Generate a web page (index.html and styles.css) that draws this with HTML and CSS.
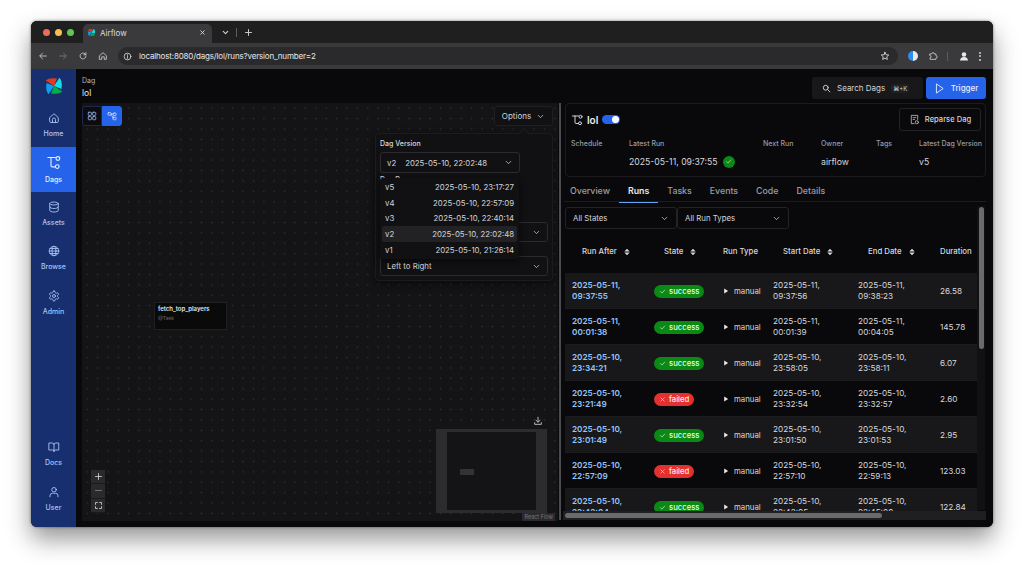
FILE: index.html
```html
<!DOCTYPE html>
<html lang="en">
<head>
    <meta charset="UTF-8">
    <title>Airflow</title>
    <link rel="stylesheet" href="styles.css">
</head>
<body>
    <svg class="icon-defs" width="0" height="0">
        <defs>
            <symbol id="logo" viewBox="0 0 24 24">
                <path fill="#e43921" d="M12 12 2 5.500Q6 1.500 15.500 3Z"/>
                <path fill="#11dfe8" d="M12 12 18.500 2Q22.500 6 21 15.500Z"/>
                <path fill="#00ad46" d="M12 12 22 18.500Q18 22.500 8.500 21Z"/>
                <path fill="#0c9ff0" d="M12 12 5.500 22Q1.500 18 3 8.500Z"/>
            </symbol>
            <symbol id="dags" viewBox="0 0 24 24">
                <path d="M3 4h12M8 4v13a2 2 0 0 0 2 2h5"/>
                <circle cx="19" cy="5.500" r="3"/>
                <circle cx="18" cy="18.500" r="3"/>
            </symbol>
            <symbol id="chev" viewBox="0 0 24 24">
                <path d="m6 9 6 6 6-6"/>
            </symbol>
            <symbol id="check" viewBox="0 0 24 24">
                <path d="m5 12.500 5 5L19.500 7"/>
            </symbol>
            <symbol id="cross" viewBox="0 0 24 24">
                <path d="M6 6l12 12M18 6 6 18"/>
            </symbol>
            <symbol id="sort" viewBox="0 0 10 12">
                <path d="M5 0.500 9.500 5H0.500ZM5 11.500 0.500 7h9Z"/>
            </symbol>
            <symbol id="play" viewBox="0 0 10 10">
                <path d="M2 1l6.500 4L2 9Z"/>
            </symbol>
        </defs>
    </svg>

    <div class="window">
        <div class="tabbar">
            <div class="lights"><i class="red"></i><i class="amber"></i><i class="green"></i></div>
            <div class="tab">
                <svg class="tab-logo"><use href="#logo"/></svg>
                <span class="tab-title">Airflow</span>
                <svg class="tab-close" viewBox="0 0 24 24"><use href="#cross"/></svg>
            </div>
            <svg class="tab-more" viewBox="0 0 24 24"><use href="#chev"/></svg>
            <span class="tab-sep"></span>
            <svg class="tab-new" viewBox="0 0 24 24"><path d="M12 4v16M4 12h16"/></svg>
        </div>

        <div class="toolbar">
            <svg class="tool" viewBox="0 0 24 24"><path d="M20 12H5M11 5l-7 7 7 7"/></svg>
            <svg class="tool dim" viewBox="0 0 24 24"><path d="M4 12h15M13 5l7 7-7 7"/></svg>
            <svg class="tool" viewBox="0 0 24 24"><path d="M19 12a7 7 0 1 1-2.200-5.100L19 9M19 4v5h-5"/></svg>
            <svg class="tool" viewBox="0 0 24 24"><path d="M4 11l8-7 8 7v9h-5v-6H9v6H4Z"/></svg>
            <div class="address">
                <svg class="addr-info" viewBox="0 0 24 24"><circle cx="12" cy="12" r="9"/><path d="M12 11v6M12 7v1.500"/></svg>
                <span class="addr-text">localhost:8080/dags/lol/runs?version_number=2</span>
                <svg class="addr-star" viewBox="0 0 24 24"><path d="m12 3 2.700 6 6.300.6-4.800 4.300 1.400 6.400L12 17l-5.600 3.300 1.400-6.400L3 9.600 9.300 9Z"/></svg>
            </div>
            <div class="ext-icons">
                <span class="ext-round"></span>
                <svg class="tool" viewBox="0 0 24 24"><path d="M5 7h4a3 3 0 0 1 6 0h4v4a3 3 0 0 1 0 6v3H5v-4a2.500 2.500 0 0 0 0-5Z"/></svg>
                <span class="tab-sep"></span>
                <svg class="avatar" viewBox="0 0 24 24"><circle cx="12" cy="12" r="11" fill="#3a3a3a"/><circle cx="12" cy="9" r="4.500" fill="#e8e8e8"/><path d="M4 21c1-6 5-7 8-7s7 1 8 7Z" fill="#e8e8e8"/></svg>
                <span class="kebab"><i></i><i></i><i></i></span>
            </div>
        </div>

        <div class="app">
            <nav class="sidebar">
                <svg class="side-logo"><use href="#logo"/></svg>
                <a class="nav-item">
                    <svg viewBox="0 0 24 24"><path d="M3.500 11 12 3.500l8.500 7.500v8a2 2 0 0 1-2 2h-13a2 2 0 0 1-2-2Z"/><path d="M9 21v-6a3 3 0 0 1 6 0v6"/></svg>
                    <span>Home</span>
                </a>
                <a class="nav-item active">
                    <svg><use href="#dags"/></svg>
                    <span>Dags</span>
                </a>
                <a class="nav-item">
                    <svg viewBox="0 0 24 24"><ellipse cx="12" cy="5" rx="8.500" ry="3"/><path d="M3.500 5v14c0 1.700 3.800 3 8.500 3s8.500-1.300 8.500-3V5M3.500 12c0 1.700 3.800 3 8.500 3s8.500-1.300 8.500-3"/></svg>
                    <span>Assets</span>
                </a>
                <a class="nav-item">
                    <svg viewBox="0 0 24 24"><circle cx="12" cy="12" r="9.500"/><ellipse cx="12" cy="12" rx="4" ry="9.500"/><path d="M2.500 12h19M4 7h16M4 17h16"/></svg>
                    <span>Browse</span>
                </a>
                <a class="nav-item">
                    <svg viewBox="0 0 24 24"><circle cx="12" cy="12" r="3"/><path d="M12.220 2h-.44a2 2 0 0 0-2 2v.18a2 2 0 0 1-1 1.730l-.43.25a2 2 0 0 1-2 0l-.15-.08a2 2 0 0 0-2.730.73l-.22.38a2 2 0 0 0 .73 2.730l.15.1a2 2 0 0 1 1 1.720v.51a2 2 0 0 1-1 1.740l-.15.09a2 2 0 0 0-.73 2.730l.22.38a2 2 0 0 0 2.730.73l.15-.08a2 2 0 0 1 2 0l.43.25a2 2 0 0 1 1 1.730V20a2 2 0 0 0 2 2h.44a2 2 0 0 0 2-2v-.18a2 2 0 0 1 1-1.730l.43-.25a2 2 0 0 1 2 0l.15.08a2 2 0 0 0 2.730-.73l.22-.39a2 2 0 0 0-.73-2.730l-.15-.08a2 2 0 0 1-1-1.740v-.5a2 2 0 0 1 1-1.740l.15-.09a2 2 0 0 0 .73-2.730l-.22-.38a2 2 0 0 0-2.730-.73l-.15.08a2 2 0 0 1-2 0l-.43-.25a2 2 0 0 1-1-1.730V4a2 2 0 0 0-2-2z"/></svg>
                    <span>Admin</span>
                </a>
                <div class="side-gap"></div>
                <a class="nav-item">
                    <svg viewBox="0 0 24 24"><path d="M12 7v14M2.500 4h6a3.500 3.500 0 0 1 3.500 3 3.500 3.500 0 0 1 3.500-3h6v14h-7a2.500 2.500 0 0 0-2.500 3 2.500 2.500 0 0 0-2.500-3h-7Z"/></svg>
                    <span>Docs</span>
                </a>
                <a class="nav-item">
                    <svg viewBox="0 0 24 24"><circle cx="12" cy="7.500" r="4.500"/><path d="M4 21.500v-2a5 5 0 0 1 5-5h6a5 5 0 0 1 5 5v2"/></svg>
                    <span>User</span>
                </a>
            </nav>

            <main class="content">
                <header class="topbar">
                    <div class="crumbs">
                        <span class="crumb-label">Dag</span>
                        <span class="crumb-name">lol</span>
                    </div>
                    <div class="search">
                        <svg viewBox="0 0 24 24"><circle cx="10" cy="10" r="6.500"/><path d="m15 15 6 6"/></svg>
                        <span>Search Dags</span>
                        <kbd>⌘+K</kbd>
                    </div>
                    <button class="trigger">
                        <svg viewBox="0 0 24 24"><path d="M6 2.500 20 12 6 21.500Z"/></svg>
                        Trigger
                    </button>
                </header>

                <div class="panes">
                    <section class="graph">
                        <div class="view-toggle">
                            <span class="toggle-btn">
                                <svg viewBox="0 0 24 24"><rect x="3" y="3" width="7.500" height="7.500" rx="1.500"/><rect x="13.500" y="3" width="7.500" height="7.500" rx="1.500"/><rect x="3" y="13.500" width="7.500" height="7.500" rx="1.500"/><rect x="13.500" y="13.500" width="7.500" height="7.500" rx="1.500"/></svg>
                            </span>
                            <span class="toggle-btn on">
                                <svg viewBox="0 0 24 24"><rect x="2" y="4" width="8" height="6" rx="2"/><rect x="15" y="5" width="7" height="6" rx="2"/><rect x="14" y="15" width="8" height="6" rx="2"/><path d="M10 7h5M10 8l5 9"/></svg>
                            </span>
                        </div>

                        <button class="options-btn">Options <svg><use href="#chev"/></svg></button>

                        <div class="options-panel">
                            <div class="opt-label">Dag Version</div>
                            <div class="opt-select short">
                                <span class="ver">v2</span><span>2025-05-10, 22:02:48</span>
                                <svg><use href="#chev"/></svg>
                            </div>
                            <div class="opt-label cut">Dag Run</div>
                            <div class="opt-select hidden-row">
                                <svg><use href="#chev"/></svg>
                            </div>
                            <div class="opt-select">
                                <span>Left to Right</span>
                                <svg><use href="#chev"/></svg>
                            </div>
                            <ul class="version-menu">
                                <li><span>v5</span><span>2025-05-10, 23:17:27</span></li>
                                <li><span>v4</span><span>2025-05-10, 22:57:09</span></li>
                                <li><span>v3</span><span>2025-05-10, 22:40:14</span></li>
                                <li class="picked"><span>v2</span><span>2025-05-10, 22:02:48</span></li>
                                <li><span>v1</span><span>2025-05-10, 21:26:14</span></li>
                            </ul>
                        </div>

                        <div class="node">
                            <div class="node-name">fetch_top_players</div>
                            <div class="node-type">@Task</div>
                        </div>

                        <div class="zoom-controls">
                            <span><svg viewBox="0 0 24 24"><path d="M12 4v16M4 12h16"/></svg></span>
                            <span class="faint"><svg viewBox="0 0 24 24"><path d="M4 12h16"/></svg></span>
                            <span><svg viewBox="0 0 24 24"><path d="M4 9V4h5M15 4h5v5M20 15v5h-5M9 20H4v-5"/></svg></span>
                        </div>

                        <svg class="download" viewBox="0 0 24 24"><path d="M12 3v11M7 10l5 5 5-5"/><path d="M4 16v4h16v-4"/></svg>

                        <div class="minimap"><div class="minimap-view"><i></i></div></div>
                        <div class="attribution">React Flow</div>
                    </section>

                    <section class="details">
                        <div class="summary">
                            <div class="summary-head">
                                <svg class="summary-icon"><use href="#dags"/></svg>
                                <strong>lol</strong>
                                <span class="switch"></span>
                                <button class="reparse">
                                    <svg viewBox="0 0 24 24"><path d="M11 21H5V3h14v9"/><path d="M9 8h6M9 12h3"/><circle cx="17" cy="18" r="3.500"/></svg>
                                    Reparse Dag
                                </button>
                            </div>
                            <div class="stats">
                                <div class="stat"><label>Schedule</label></div>
                                <div class="stat"><label>Latest Run</label><span>2025-05-11, 09:37:55 <b class="ok-dot"><svg><use href="#check"/></svg></b></span></div>
                                <div class="stat"><label>Next Run</label></div>
                                <div class="stat"><label>Owner</label><span>airflow</span></div>
                                <div class="stat"><label>Tags</label></div>
                                <div class="stat"><label>Latest Dag Version</label><span>v5</span></div>
                            </div>
                        </div>

                        <div class="tabs">
                            <a>Overview</a>
                            <a class="current">Runs</a>
                            <a>Tasks</a>
                            <a>Events</a>
                            <a>Code</a>
                            <a>Details</a>
                        </div>

                        <div class="runs">
                            <div class="filters">
                                <div class="filter">All States <svg><use href="#chev"/></svg></div>
                                <div class="filter">All Run Types <svg><use href="#chev"/></svg></div>
                            </div>

                            <div class="row head">
                                <div class="th first">Run After <svg><use href="#sort"/></svg></div>
                                <div class="th second">State <svg><use href="#sort"/></svg></div>
                                <div class="th">Run Type</div>
                                <div class="th second">Start Date <svg><use href="#sort"/></svg></div>
                                <div class="th second">End Date <svg><use href="#sort"/></svg></div>
                                <div class="th">Duration</div>
                            </div>

                            <div class="row alt">
                                <a class="run-link">2025-05-11,<br>09:37:55</a>
                                <div><span class="badge success"><svg><use href="#check"/></svg>success</span></div>
                                <div class="type"><svg><use href="#play"/></svg>manual</div>
                                <div>2025-05-11,<br>09:37:56</div>
                                <div>2025-05-11,<br>09:38:23</div>
                                <div>26.58</div>
                            </div>
                            <div class="row">
                                <a class="run-link">2025-05-11,<br>00:01:38</a>
                                <div><span class="badge success"><svg><use href="#check"/></svg>success</span></div>
                                <div class="type"><svg><use href="#play"/></svg>manual</div>
                                <div>2025-05-11,<br>00:01:39</div>
                                <div>2025-05-11,<br>00:04:05</div>
                                <div>145.78</div>
                            </div>
                            <div class="row alt">
                                <a class="run-link">2025-05-10,<br>23:34:21</a>
                                <div><span class="badge success"><svg><use href="#check"/></svg>success</span></div>
                                <div class="type"><svg><use href="#play"/></svg>manual</div>
                                <div>2025-05-10,<br>23:58:05</div>
                                <div>2025-05-10,<br>23:58:11</div>
                                <div>6.07</div>
                            </div>
                            <div class="row">
                                <a class="run-link">2025-05-10,<br>23:21:49</a>
                                <div><span class="badge failed"><svg><use href="#cross"/></svg>failed</span></div>
                                <div class="type"><svg><use href="#play"/></svg>manual</div>
                                <div>2025-05-10,<br>23:32:54</div>
                                <div>2025-05-10,<br>23:32:57</div>
                                <div>2.60</div>
                            </div>
                            <div class="row alt">
                                <a class="run-link">2025-05-10,<br>23:01:49</a>
                                <div><span class="badge success"><svg><use href="#check"/></svg>success</span></div>
                                <div class="type"><svg><use href="#play"/></svg>manual</div>
                                <div>2025-05-10,<br>23:01:50</div>
                                <div>2025-05-10,<br>23:01:53</div>
                                <div>2.95</div>
                            </div>
                            <div class="row">
                                <a class="run-link">2025-05-10,<br>22:57:09</a>
                                <div><span class="badge failed"><svg><use href="#cross"/></svg>failed</span></div>
                                <div class="type"><svg><use href="#play"/></svg>manual</div>
                                <div>2025-05-10,<br>22:57:10</div>
                                <div>2025-05-10,<br>22:59:13</div>
                                <div>123.03</div>
                            </div>
                            <div class="row alt">
                                <a class="run-link">2025-05-10,<br>22:42:04</a>
                                <div><span class="badge success"><svg><use href="#check"/></svg>success</span></div>
                                <div class="type"><svg><use href="#play"/></svg>manual</div>
                                <div>2025-05-10,<br>22:42:05</div>
                                <div>2025-05-10,<br>22:45:08</div>
                                <div>122.84</div>
                            </div>

                            <div class="scroll-y"><i></i></div>
                            <div class="scroll-x"><i></i></div>
                        </div>
                    </section>
                </div>
            </main>
        </div>
    </div>
</body>
</html>
```

FILE: styles.css
```css
* {
    box-sizing: border-box;
}
html, body {
    height: 100%;
}
body {
    margin: 0;
    background-color: #fff;
    font-family: Inter, "Liberation Sans", sans-serif;
    font-size: 9px;
    color: #e4e4e7;
    padding: 21px 31px 42px;
    overflow: hidden;
}
svg {
    fill: none;
    stroke: currentColor;
    stroke-width: 2;
    stroke-linecap: round;
    stroke-linejoin: round;
    display: block;
    flex: none;
}
.icon-defs {
    position: absolute;
}
button {
    font: inherit;
    cursor: pointer;
}

.window {
    height: 506px;
    display: flex;
    flex-direction: column;
    border-radius: 6px;
    overflow: hidden;
    box-shadow: 0 12px 24px rgba(0, 0, 0, 0.42), 0 0 3px rgba(0, 0, 0, 0.5);
    background: #000;
}

/* browser chrome */
.tabbar {
    height: 22px;
    flex: none;
    background-color: #1f1f1f;
    display: flex;
    align-items: flex-end;
    padding-left: 12px;
}
.lights {
    display: flex;
    gap: 5px;
    align-self: center;
    margin-right: 9px;
}
.lights i {
    width: 7px;
    height: 7px;
    border-radius: 50%;
}
.lights .red { background: #ed6a5e; }
.lights .amber { background: #f4bf4f; }
.lights .green { background: #61c554; }
.tab {
    width: 129px;
    height: 19px;
    background: #3a3a3c;
    border-radius: 5px 5px 0 0;
    display: flex;
    align-items: center;
    padding: 0 6px 2px 4px;
    font-size: 8px;
    color: #dedede;
}
.tab-logo {
    width: 9px;
    height: 9px;
    margin-right: 4px;
    stroke: none;
}
.tab-title {
    flex: 1;
}
.tab-close {
    width: 7px;
    height: 7px;
    stroke-width: 3;
}
.tab-more {
    width: 9px;
    height: 9px;
    margin: 0 6px 6px 9px;
    stroke-width: 3;
    color: #cfcfcf;
}
.tab-sep {
    width: 1px;
    height: 9px;
    background: #5c5c5c;
    margin-bottom: 6px;
}
.tab-new {
    width: 9px;
    height: 9px;
    margin: 0 0 6px 7px;
    stroke-width: 2.5;
    color: #cfcfcf;
}
.toolbar {
    height: 26px;
    flex: none;
    background: #3a3a3c;
    display: flex;
    align-items: center;
    padding: 0 12px 0 7px;
    gap: 10px;
    color: #cfcfcf;
}
.tool {
    width: 10px;
    height: 10px;
}
.tool.dim {
    color: #7b7b7b;
}
.address {
    flex: 1;
    height: 18px;
    background: #2a2a2c;
    border-radius: 9px;
    display: flex;
    align-items: center;
    padding: 0 8px 0 5px;
    font-size: 8px;
    letter-spacing: -0.16px;
    color: #e6e6e6;
}
.addr-info {
    width: 9px;
    height: 9px;
    margin-right: 7px;
}
.addr-text {
    flex: 1;
}
.addr-star {
    width: 10px;
    height: 10px;
}
.ext-icons {
    display: flex;
    align-items: center;
    gap: 10px;
}
.ext-icons .tab-sep {
    margin: 0 -1px 0 -1px;
}
.ext-round {
    width: 10px;
    height: 10px;
    border-radius: 50%;
    background: conic-gradient(#e8e8e8 0 50%, #2d8cf0 50% 100%);
}
.avatar {
    width: 12px;
    height: 12px;
    stroke: none;
    margin-left: 1px;
}
.kebab {
    display: flex;
    flex-direction: column;
    gap: 1.5px;
    margin-left: -1px;
}
.kebab i {
    width: 2px;
    height: 2px;
    border-radius: 50%;
    background: #d0d0d0;
}

/* app shell */
.app {
    flex: 1;
    display: flex;
    min-height: 0;
}
.sidebar {
    width: 45px;
    flex: none;
    background: #172f6f;
    display: flex;
    flex-direction: column;
    align-items: stretch;
    padding-top: 7px;
}
.side-logo {
    width: 20px;
    height: 20px;
    margin: 0 auto 6.5px;
    stroke: none;
}
.nav-item {
    height: 44.5px;
    flex: none;
    display: flex;
    flex-direction: column;
    align-items: center;
    padding-top: 9px;
    gap: 5px;
    font-size: 7px;
    line-height: 9px;
    font-weight: 500;
    color: #a9c4f5;
}
.nav-item svg {
    width: 12px;
    height: 12px;
    stroke-width: 1.8;
}
.nav-item.active {
    background: #2563eb;
    color: #e8f0ff;
    padding-top: 8px;
    gap: 4.5px;
}
.nav-item.active svg {
    width: 15px;
    height: 15px;
}
.side-gap {
    flex: 1;
}
.sidebar .nav-item:last-child {
    margin-bottom: 6px;
}

.content {
    flex: 1;
    min-width: 0;
    background: #09090b;
    display: flex;
    flex-direction: column;
    padding: 0 7px 7px 6px;
}
.topbar {
    height: 34px;
    flex: none;
    display: flex;
    align-items: center;
    padding-top: 4px;
}
.crumbs {
    flex: 1;
    display: flex;
    flex-direction: column;
    gap: 2px;
    align-self: flex-start;
    padding-top: 3px;
}
.crumb-label {
    font-size: 7px;
    line-height: 10px;
    color: #b5b5ba;
}
.crumb-name {
    font-size: 8.5px;
    line-height: 10px;
    color: #e8e8ea;
}
.search {
    width: 111px;
    height: 22px;
    background: #18181b;
    border-radius: 3px;
    display: flex;
    align-items: center;
    padding-left: 10px;
    gap: 6px;
    font-size: 8px;
    color: #d4d4d8;
    margin-right: 3px;
}
.search svg {
    width: 9px;
    height: 9px;
    stroke-width: 2.5;
}
.search kbd {
    font-family: inherit;
    font-size: 6px;
    background: #202023;
    border-radius: 2px;
    padding: 1px 2px;
}
.trigger {
    width: 60px;
    height: 22px;
    background: #2563eb;
    border: none;
    border-radius: 3px;
    color: #e6eeff;
    font-size: 8px;
    font-weight: 500;
    display: flex;
    align-items: center;
    justify-content: center;
    gap: 6px;
}
.trigger svg {
    width: 11px;
    height: 11px;
}

.panes {
    flex: 1;
    display: flex;
    min-height: 0;
}

/* graph side */
.graph {
    width: 476px;
    flex: none;
    position: relative;
    background-color: #141416;
    background-image: radial-gradient(#303033 0.8px, transparent 1px);
    background-size: 10.4px 10.4px;
    overflow: hidden;
    margin-bottom: -1px;
}
.view-toggle {
    position: absolute;
    left: 0;
    top: 3px;
    display: flex;
}
.toggle-btn {
    width: 20px;
    height: 20px;
    display: flex;
    align-items: center;
    justify-content: center;
    border: 1px solid #1e2a4d;
    border-radius: 3px 0 0 3px;
    background: #0c0c0e;
    color: #93b4ee;
}
.toggle-btn.on {
    background: #2563eb;
    border-color: #2563eb;
    border-radius: 0 3px 3px 0;
    color: #cfe0ff;
}
.toggle-btn svg {
    width: 10px;
    height: 10px;
}
.options-btn {
    position: absolute;
    right: 5px;
    top: 3px;
    width: 59px;
    height: 20px;
    background: #111113;
    border: 1px solid #1f1f22;
    border-radius: 3px;
    color: #d4d4d8;
    font-size: 8px;
    display: flex;
    align-items: center;
    justify-content: center;
    gap: 5px;
}
.options-btn svg {
    width: 9px;
    height: 9px;
}
.options-panel {
    position: absolute;
    left: 293px;
    top: 30px;
    width: 178px;
    height: 148px;
    background: #111113;
    border: 1px solid #1c1c1f;
    border-radius: 4px;
    padding: 4px 4px;
    box-shadow: 0 3px 8px rgba(0, 0, 0, 0.5);
}
.options-panel::before {
    content: "";
    position: absolute;
    left: 144px;
    top: -4px;
    width: 7px;
    height: 7px;
    background: #111113;
    border-left: 1px solid #1c1c1f;
    border-top: 1px solid #1c1c1f;
    transform: rotate(45deg);
}
.opt-label {
    font-size: 7px;
    font-weight: 500;
    line-height: 11px;
    color: #d8d8dc;
    height: 11px;
    margin-bottom: 3px;
}
.opt-label.cut {
    margin: 1px 0 0;
    height: 9px;
}
.opt-select {
    height: 20px;
    border: 1px solid #2b2b2f;
    border-radius: 3px;
    display: flex;
    align-items: center;
    padding: 0 6px;
    font-size: 7.8px;
    color: #d4d4d8;
    margin-bottom: 14px;
}
.opt-select.short {
    width: 140px;
    height: 21px;
    margin-bottom: 0;
}
.opt-select.hidden-row {
    margin-top: 39px;
}
.opt-select:last-of-type {
    margin-bottom: 0;
}
.opt-select .ver {
    margin-right: 9px;
}
.opt-select svg {
    width: 9px;
    height: 9px;
    margin-left: auto;
}
.version-menu {
    position: absolute;
    left: 4px;
    top: 43.5px;
    width: 139px;
    margin: 0;
    padding: 2px;
    list-style: none;
    background: #111113;
    border-radius: 3px;
    box-shadow: 0 2px 6px rgba(0, 0, 0, 0.6);
    font-size: 7.8px;
    color: #d4d4d8;
}
.version-menu li {
    height: 15.6px;
    display: flex;
    justify-content: space-between;
    align-items: center;
    padding: 0 3px;
    border-radius: 2px;
}
.version-menu li.picked {
    background: #222225;
}
.node {
    position: absolute;
    left: 72px;
    top: 199px;
    width: 73px;
    height: 28px;
    background: #0a0a0b;
    border: 1px solid #1f1f22;
    padding: 2px 3px;
    font-size: 6px;
}
.node-name {
    font-weight: 600;
    color: #e4e4e7;
    margin-bottom: 3px;
}
.node-type {
    font-size: 5px;
    color: #6f6f75;
}
.zoom-controls {
    position: absolute;
    left: 9px;
    bottom: 8px;
    width: 14px;
    background: #2a2a2c;
}
.zoom-controls span {
    height: 14.5px;
    display: flex;
    align-items: center;
    justify-content: center;
    color: #e4e4e7;
    border-bottom: 1px solid #1a1a1c;
}
.zoom-controls .faint {
    color: #8a8a8e;
}
.zoom-controls svg {
    width: 9px;
    height: 9px;
}
.download {
    position: absolute;
    right: 15px;
    top: 313px;
    width: 10px;
    height: 10px;
    color: #d4d4d8;
}
.minimap {
    position: absolute;
    left: 354px;
    top: 326px;
    width: 111px;
    height: 84px;
    background: #2c2c2e;
    padding: 3px 11px 3px 11px;
}
.minimap-view {
    height: 78px;
    background: #141416;
    position: relative;
}
.minimap-view i {
    position: absolute;
    left: 13px;
    top: 37px;
    width: 14px;
    height: 6px;
    background: #333336;
}
.attribution {
    position: absolute;
    right: 3px;
    bottom: 0;
    padding: 1px 2px;
    background: #2a2a2c;
    color: #77777c;
    font-size: 5.5px;
}

/* details side */
.details {
    flex: 1;
    min-width: 0;
    border-left: 2px solid #4c4c50;
    margin-left: 1px;
    padding-left: 2px;
    display: flex;
    flex-direction: column;
    min-height: 0;
}
.summary {
    height: 74px;
    flex: none;
    border: 1px solid #1c1c1f;
    border-radius: 4px;
    margin-left: 2px;
    padding: 4px 4px 0 5px;
}
.summary-head {
    display: flex;
    align-items: center;
    gap: 3px;
    height: 23px;
}
.summary-head strong {
    font-size: 10px;
    font-weight: 600;
    color: #f0f0f2;
}
.summary-icon {
    width: 12px;
    height: 12px;
    color: #d4d4d8;
    margin-right: 1px;
}
.switch {
    width: 18px;
    height: 9px;
    border-radius: 5px;
    background: #2563eb;
    position: relative;
    margin-left: 1px;
}
.switch::after {
    content: "";
    position: absolute;
    right: 1px;
    top: 1px;
    width: 7px;
    height: 7px;
    border-radius: 50%;
    background: #fff;
}
.reparse {
    margin-left: auto;
    width: 82px;
    height: 23px;
    background: transparent;
    border: 1px solid #232326;
    border-radius: 3px;
    color: #d4d4d8;
    font-size: 7.6px;
    font-weight: 500;
    display: flex;
    align-items: center;
    justify-content: center;
    gap: 5px;
}
.reparse svg {
    width: 11px;
    height: 11px;
    stroke-width: 1.6;
}
.stats {
    display: grid;
    grid-template-columns: 58px 134px 58px 55px 43px 1fr;
    margin-top: 8px;
}
.stat label {
    display: block;
    font-size: 7px;
    font-weight: 500;
    color: #9a9aa0;
    height: 11px;
    white-space: nowrap;
}
.stat span {
    display: flex;
    align-items: center;
    gap: 5px;
    font-size: 8.7px;
    color: #d8d8dc;
    margin-top: 5px;
    height: 13px;
    white-space: nowrap;
}
.ok-dot {
    width: 12px;
    height: 12px;
    border-radius: 50%;
    background: #0a8a14;
    display: flex;
    align-items: center;
    justify-content: center;
    color: #e8ffe8;
}
.ok-dot svg {
    width: 7px;
    height: 7px;
}

.tabs {
    height: 25px;
    flex: none;
    display: flex;
    gap: 18px;
    padding-left: 6px;
    margin-left: 1px;
    border-bottom: 1px solid #1c1c1f;
    font-size: 8.8px;
    font-weight: 500;
    color: #9d9da3;
    align-items: flex-start;
}
.tabs a {
    height: 25px;
    line-height: 27px;
    position: relative;
}
.tabs .current {
    color: #e8e8ea;
    font-weight: 600;
}
.tabs .current::after {
    content: "";
    position: absolute;
    left: -9px;
    right: -9px;
    bottom: -1px;
    height: 1.5px;
    background: #60a5fa;
}

.runs {
    flex: 1;
    min-height: 0;
    position: relative;
    overflow: hidden;
    padding: 5px 0 0 2px;
}
.filters {
    display: flex;
}
.filter {
    height: 22px;
    border: 1px solid #232326;
    border-radius: 3px;
    width: 112px;
    padding: 0 7px;
    display: flex;
    align-items: center;
    justify-content: space-between;
    font-size: 7.8px;
    color: #d4d4d8;
}
.filter svg {
    width: 9px;
    height: 9px;
}
.row {
    width: 413px;
    height: 36px;
    display: grid;
    grid-template-columns: 82px 69px 50px 85px 82px 1fr;
    align-items: center;
    padding: 1px 0 0 7px;
    line-height: 11px;
    font-size: 8.2px;
    color: #d8d8dc;
    border-bottom: 1px solid #1c1c1f;
}
.row.alt {
    background: #18181b;
}
.row.head {
    height: 44px;
    border-bottom: none;
    font-size: 7.8px;
    font-weight: 500;
}
.th {
    display: flex;
    align-items: center;
    gap: 7px;
}
.th svg {
    width: 6px;
    height: 8px;
    fill: currentColor;
    stroke: none;
}
.th.first {
    padding-left: 10px;
}
.th.second {
    padding-left: 10px;
}
.run-link {
    color: #93c5fd;
    font-weight: 600;
}
.badge {
    display: inline-flex;
    align-items: center;
    gap: 3px;
    height: 13px;
    border-radius: 7px;
    padding: 0 5px;
    color: #e8ffe8;
    font-size: 7.7px;
    font-weight: 500;
    line-height: 13px;
}
.badge svg {
    width: 7px;
    height: 7px;
}
.badge.success {
    background: #0a8a14;
}
.badge.failed {
    background: #e53030;
    color: #ffeaea;
}
.type {
    display: flex;
    align-items: center;
    gap: 5px;
    font-size: 7.8px;
}
.type svg {
    width: 6px;
    height: 6px;
    fill: #e8e8ea;
    stroke: none;
}
.scroll-y {
    position: absolute;
    right: 1px;
    top: 4px;
    bottom: 10px;
    width: 8px;
    background: #111113;
}
.scroll-y i {
    display: block;
    margin: 1px auto 0;
    width: 5px;
    height: 142px;
    background: #6a6a6e;
    border-radius: 3px;
}
.scroll-x {
    position: absolute;
    left: 0;
    right: 0;
    bottom: 0;
    height: 9px;
    background: #1f1f22;
    padding: 2px;
}
.scroll-x i {
    display: block;
    width: 317px;
    height: 5px;
    background: #6a6a6e;
    border-radius: 3px;
}
```
